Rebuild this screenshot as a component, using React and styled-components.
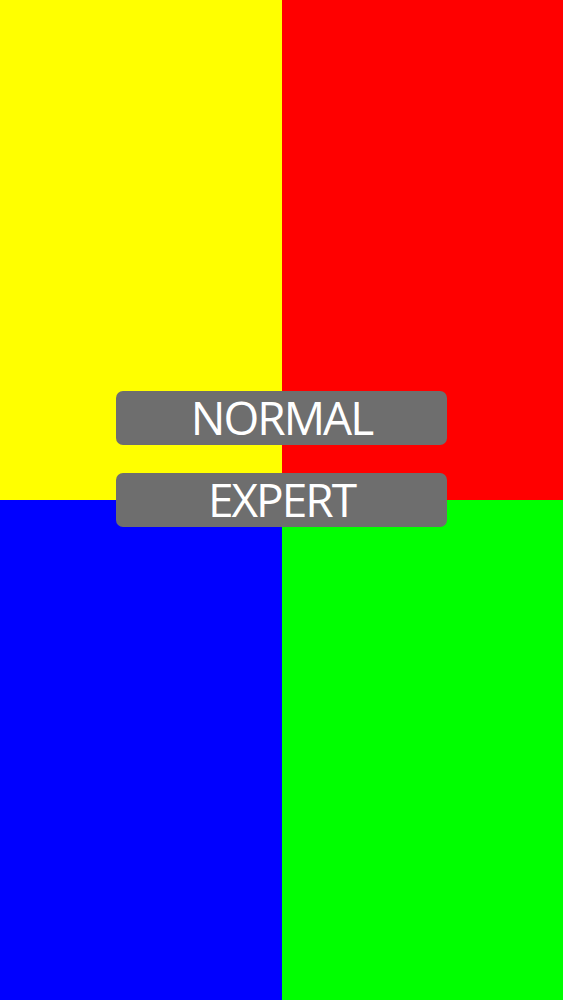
import React from "react";
import styled, { createGlobalStyle } from "styled-components";

const Global = createGlobalStyle`
  html, body { margin: 0; padding: 0; }
  body { font-family: "Open Sans", "Liberation Sans", sans-serif; }
`;

const Screen = styled.div`
  position: relative;
  width: 563px;
  height: 1000px;
  overflow: hidden;
  display: grid;
  grid-template-columns: 282px 281px;
  grid-template-rows: 500px 500px;
`;

const Quad = styled.div`
  background: ${(p) => p.$color};
`;

const Menu = styled.div`
  position: absolute;
  top: 391px;
  left: 0;
  right: 0;
  display: flex;
  flex-direction: column;
  align-items: center;
  gap: 28px;
`;

const MenuButton = styled.button`
  width: 331px;
  height: 54px;
  padding: 0 0 3px 0;
  border: none;
  border-radius: 7px;
  background: #6e6e6e;
  color: #ffffff;
  font-family: "Open Sans", "Liberation Sans", sans-serif;
  font-size: 46px;
  font-weight: 400;
  letter-spacing: -2px;
  line-height: 54px;
  display: flex;
  align-items: center;
  justify-content: center;
  cursor: pointer;
`;

export default function App() {
  return (
    <>
      <Global />
      <Screen>
        <Quad $color="#ffff00" />
        <Quad $color="#ff0000" />
        <Quad $color="#0000ff" />
        <Quad $color="#00ff00" />
        <Menu>
          <MenuButton>NORMAL</MenuButton>
          <MenuButton>EXPERT</MenuButton>
        </Menu>
      </Screen>
    </>
  );
}
